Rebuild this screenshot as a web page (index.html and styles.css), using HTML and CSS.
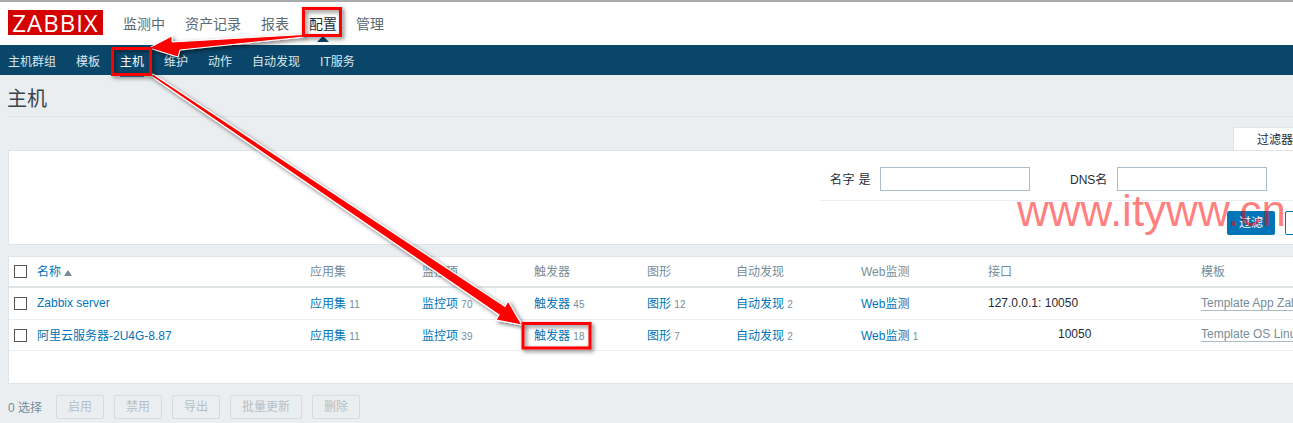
FILE: index.html
```html
<!DOCTYPE html>
<html>
  <head>
    <meta name="viewport" content="width=device-width,initial-scale=1.0">
    <title>主机</title>
    <link rel="stylesheet" href="styles.css">
  </head>
  <body>
    <header class="top-nav">
      <div class="logo">ZABBIX</div>
      <a class="top-link">监测中</a>
      <a class="top-link">资产记录</a>
      <a class="top-link">报表</a>
      <a class="top-link active">配置</a>
      <a class="top-link">管理</a>
    </header>
    <nav class="sub-nav">
      <a>主机群组</a>
      <a>模板</a>
      <a class="selected">主机</a>
      <a>维护</a>
      <a>动作</a>
      <a>自动发现</a>
      <a>IT服务</a>
    </nav>

    <main class="page">
      <h1 class="title">主机</h1>

      <div class="tab-row"><div class="tab">过滤器</div></div>
      <section class="filter">
        <div class="filter-fields">
          <label class="name-label">名字 是</label>
          <div class="text-box"></div>
          <label class="dns-label">DNS名</label>
          <div class="text-box"></div>
        </div>
        <div class="filter-buttons">
          <div class="btn-filter">过滤</div>
          <div class="btn-reset"></div>
        </div>
      </section>

      <section class="hosts">
        <div class="row head">
          <div class="check"></div>
          <div class="sort">名称 <span class="arrow-up"></span></div>
          <div>应用集</div>
          <div>监控项</div>
          <div>触发器</div>
          <div>图形</div>
          <div>自动发现</div>
          <div>Web监测</div>
          <div>接口</div>
          <div>模板</div>
        </div>
        <div class="row">
          <div class="check"></div>
          <div><a>Zabbix server</a></div>
          <div><a>应用集</a> <small>11</small></div>
          <div><a>监控项</a> <small>70</small></div>
          <div><a>触发器</a> <small>45</small></div>
          <div><a>图形</a> <small>12</small></div>
          <div><a>自动发现</a> <small>2</small></div>
          <div><a>Web监测</a></div>
          <div class="iface">127.0.0.1: 10050</div>
          <div><a class="tpl">Template App Zabbix Server</a></div>
        </div>
        <div class="row last">
          <div class="check"></div>
          <div><a>阿里云服务器-2U4G-8.87</a></div>
          <div><a>应用集</a> <small>11</small></div>
          <div><a>监控项</a> <small>39</small></div>
          <div><a>触发器</a> <small>18</small></div>
          <div><a>图形</a> <small>7</small></div>
          <div><a>自动发现</a> <small>2</small></div>
          <div><a>Web监测</a> <small>1</small></div>
          <div class="iface hidden-ip">10050</div>
          <div><a class="tpl">Template OS Linux</a></div>
        </div>
      </section>

      <footer class="actions">
        <span class="count">0 选择</span>
        <div class="btn-off">启用</div>
        <div class="btn-off">禁用</div>
        <div class="btn-off">导出</div>
        <div class="btn-off">批量更新</div>
        <div class="btn-off">删除</div>
      </footer>
    </main>

    <div class="watermark">www.ityww.cn</div>

    <svg class="marks" width="1293" height="423" viewBox="0 0 1293 423">
      <defs>
        <filter id="shadow" x="-10%" y="-10%" width="120%" height="120%">
          <feDropShadow dx="2" dy="2" stdDeviation="2" flood-color="#000" flood-opacity="0.55"/>
        </filter>
      </defs>
      <g filter="url(#shadow)">
        <polygon points="304,34.5 172,42 172,36 149,48 178,57 180,50 304,37" fill="#f00" stroke="#fff" stroke-width="1"/>
        <polygon points="153,74 505,306.5 508,301 522,325 496,320 499,315 151,76" fill="#f00" stroke="#fff" stroke-width="1.2"/>
      </g>
      <g class="box" filter="url(#shadow)">
        <rect x="303.5" y="8.5" width="37" height="27"/>
        <rect x="112.5" y="48.5" width="38" height="26"/>
        <rect x="523" y="323.5" width="67" height="24.5"/>
      </g>
    </svg>
  </body>
</html>
```

FILE: styles.css
```css
html, body {
  margin: 0;
  height: 423px;
  overflow: hidden;
}

body {
  position: relative;
  background: #ebeef0;
  font-family: "Liberation Sans", "Noto Sans CJK SC", sans-serif;
  font-size: 12px;
  color: #1f2c33;
}

.top-nav {
  display: flex;
  align-items: center;
  height: 41px;
  padding: 0 0 2px 8px;
  background: #fff;
  border-top: 2px solid #a9a9ad;
}

.logo {
  width: 95px;
  height: 25px;
  margin-right: 10px;
  background: #d40000;
  color: #fff;
  font-family: "Open Sans", "Liberation Sans", sans-serif;
  font-size: 24px;
  letter-spacing: 1px;
  line-height: 26px;
  text-align: center;
}

.top-link {
  padding: 0 10px;
  font-size: 14px;
  color: #5b6a73;
}

.top-link.active {
  position: relative;
  color: #1f2c33;
  margin-right: -1px;
}

/* little notch pointing at the open section */
.top-link.active::after {
  content: "";
  position: absolute;
  left: 50%;
  top: 23px;
  margin-left: -6px;
  border: 6px solid transparent;
  border-top: 0;
  border-bottom: 6px solid #0a466a;
}

.sub-nav {
  display: flex;
  align-items: center;
  gap: 20px;
  height: 30px;
  padding-left: 8px;
  background: #0a466a;
  color: #dbe6ec;
}

.sub-nav .selected {
  padding: 8px 0 6px;
  border-bottom: 2px solid #2a7fb0;
  color: #fff;
}

.page {
  padding-left: 8px;
  width: 1400px;
}

.title {
  height: 41px;
  margin: 0 0 11px;
  border-bottom: 1px solid #dfe4e7;
  font-size: 20px;
  font-weight: normal;
  line-height: 48px;
  text-indent: -1px;
  color: #38454d;
}

.tab-row {
  display: flex;
  padding-left: 1225px;
}

.tab {
  width: 150px;
  height: 22px;
  padding-left: 23px;
  background: #fff;
  border-left: 1px solid #dfe4e7;
  border-top: 1px solid #dfe4e7;
  margin-top: -1px;
  line-height: 25px;
}

.filter {
  height: 93px;
  margin-bottom: 11px;
  background: #fff;
  border: 1px solid #dfe4e7;
  border-width: 1px 0 1px 1px;
}

.filter-fields {
  display: flex;
  align-items: center;
  height: 43px;
  margin-left: 811px;
  padding-top: 6px;
  border-bottom: 1px solid #ebeef0;
}

.name-label {
  width: 40px;
  margin: 0 10px;
  letter-spacing: 0.4px;
  white-space: nowrap;
}

.dns-label {
  margin: 0 10px 0 40px;
}

.text-box {
  width: 148px;
  height: 22px;
  border: 1px solid #acbbc4;
}

.filter-buttons {
  display: flex;
  gap: 10px;
  margin: 10px 0 0 1218px;
}

.btn-filter {
  width: 48px;
  height: 24px;
  background: #0275b8;
  border-radius: 2px;
  color: #fff;
  line-height: 24px;
  text-align: center;
}

.btn-reset {
  width: 48px;
  height: 22px;
  background: #fff;
  border: 1px solid #0275b8;
  border-radius: 2px;
}

.hosts {
  height: 126px;
  background: #fff;
  border: 1px solid #dfe4e7;
  border-right: 0;
}

.row {
  display: grid;
  grid-template-columns: 23px 273px 112px 112px 113px 89px 125px 127px 213px 1fr;
  align-items: center;
  height: 31px;
  padding-left: 5px;
  border-bottom: 1px solid #ebeef0;
  white-space: nowrap;
}

/* text sits a pixel above the checkbox centre */
.row > div {
  margin-bottom: 2px;
}

.row > .check {
  margin-bottom: 0;
}

.row.head {
  height: 29px;
  border-bottom: 2px solid #dfe4e7;
  color: #768d99;
}

.row.last {
  height: 30px;
}

.row a {
  color: #0275b8;
}

.row a.tpl {
  color: #768d99;
  border-bottom: 1px solid #acbbc4;
}

.sort {
  color: #0275b8;
}

.arrow-up {
  display: inline-block;
  border: 4px solid transparent;
  border-top: 0;
  border-bottom: 6px solid #768d99;
}

.row small {
  font-size: 10px;
  color: #768d99;
}

.check {
  width: 11px;
  height: 11px;
  border: 1px solid #555;
}

.hidden-ip {
  padding-left: 70px;
}

.actions {
  display: flex;
  align-items: center;
  height: 45px;
  color: #768d99;
}

.count {
  margin-right: 14px;
}

.btn-off {
  margin-right: 10px;
  padding: 0 11px;
  height: 22px;
  border: 1px solid #d5dbde;
  border-radius: 2px;
  color: #b5c0c6;
  line-height: 22px;
}

.watermark {
  position: absolute;
  left: 1017px;
  top: 183px;
  color: rgba(255, 0, 0, 0.5);
  font-size: 44px;
  line-height: 56px;
  white-space: nowrap;
}

.marks {
  position: absolute;
  left: 0;
  top: 0;
}

.box rect {
  fill: none;
  stroke: #f00;
  stroke-width: 3;
}
```
